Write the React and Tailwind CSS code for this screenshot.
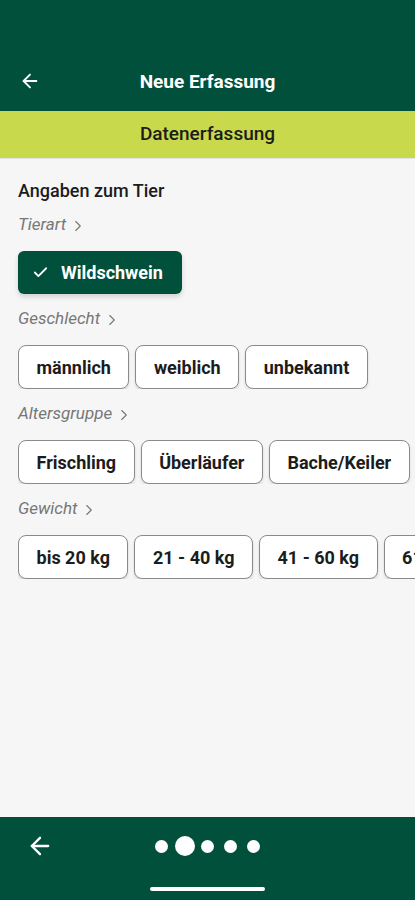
import { ArrowLeft, Check, ChevronRight } from "lucide-react";

const groups = [
  { label: "Geschlecht", options: ["männlich", "weiblich", "unbekannt"] },
  { label: "Altersgruppe", options: ["Frischling", "Überläufer", "Bache/Keiler", "unbekannt"] },
  { label: "Gewicht", options: ["bis 20 kg", "21 - 40 kg", "41 - 60 kg", "61 - 80 kg"] },
];

function SectionLabel({ children }) {
  return (
    <div className="h-6 flex items-center gap-[3px] text-[17px] italic text-[#777]">
      <span>{children}</span>
      <ChevronRight size={18} strokeWidth={1.5} className="mt-[1px]" />
    </div>
  );
}

function Chip({ label }) {
  return (
    <button className="h-11 shrink-0 px-[17.5px] rounded-lg border border-[#8a8a8a] bg-white text-[18px] font-bold text-[#1c1c1c] shadow-[0_2px_3px_rgba(0,0,0,0.12)]">
      {label}
    </button>
  );
}

export default function App() {
  return (
    <div className="w-[415px] h-[900px] flex flex-col bg-[#f6f6f6] overflow-hidden" style={{ fontFamily: "Roboto, 'Noto Sans', sans-serif" }}>
      {/* Top bar */}
      <div className="h-[111px] bg-[#00503c] flex items-end">
        <div className="relative w-full h-[56px] flex items-center justify-center mb-[1px]">
          <ArrowLeft size={22} strokeWidth={2} className="absolute left-[19px] top-[16px] text-white" />
          <span className="text-white text-[19px] font-bold">Neue Erfassung</span>
        </div>
      </div>
      {/* Step header */}
      <div className="h-[47px] bg-[#c8d94b] flex items-center justify-center">
        <span className="text-[#1c1c1c] text-[19px] font-medium">Datenerfassung</span>
      </div>

      {/* Content */}
      <div className="flex-1 pl-[18px] pt-[19px] border-t border-[#e4e4e4]">
        <div className="h-6 flex items-center text-[18px] font-medium text-[#1c1c1c]">Angaben zum Tier</div>

        <div className="mt-[11px]">
          <SectionLabel>Tierart</SectionLabel>
        </div>
        <button className="mt-[14px] h-[43px] w-[164px] rounded-md bg-[#00503c] flex items-center gap-[12px] pl-[14px] shadow-[0_3px_5px_rgba(0,0,0,0.15)]">
          <Check size={17} strokeWidth={2.5} className="text-white" />
          <span className="text-white text-[18px] font-bold">Wildschwein</span>
        </button>

        {groups.map((g) => (
          <div key={g.label}>
            <div className="mt-[13px]">
              <SectionLabel>{g.label}</SectionLabel>
            </div>
            <div className="mt-[14px] flex gap-[6px] overflow-hidden">
              {g.options.map((o) => (
                <Chip key={o} label={o} />
              ))}
            </div>
          </div>
        ))}
      </div>

      {/* Bottom bar */}
      <div className="h-[83px] bg-[#00503c] relative flex flex-col items-center">
        <ArrowLeft size={28} strokeWidth={2} className="absolute left-[26px] top-[15px] text-white" />
        <div className="mt-[19px] flex items-center">
          {[0, 1, 2, 3, 4].map((i) => (
            <div key={i} className="w-[23px] h-5 flex items-center justify-center">
              <div className={i === 1 ? "w-5 h-5 rounded-full bg-white" : "w-[13px] h-[13px] rounded-full bg-white"} />
            </div>
          ))}
        </div>
        <div className="mt-[31px] w-[115px] h-1 rounded-full bg-white" />
      </div>
    </div>
  );
}
